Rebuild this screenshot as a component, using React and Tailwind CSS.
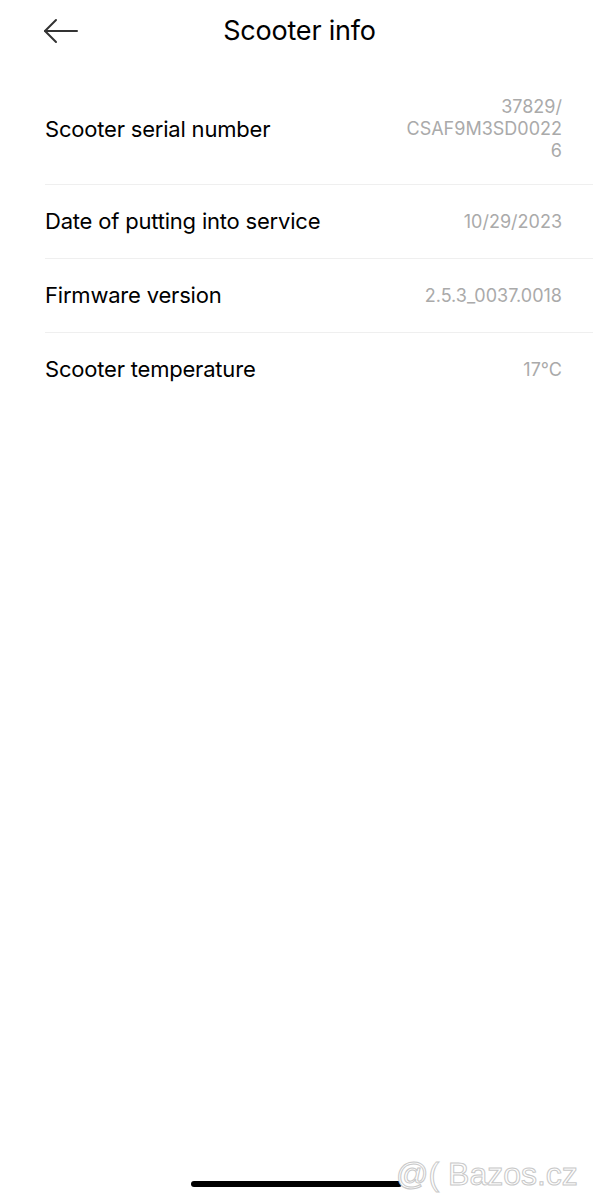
import React from 'react';

const rows = [
    { label: 'Scooter serial number', value: '37829/\u200BCSAF9M3SD00226' },
    { label: 'Date of putting into service', value: '10/29/2023' },
    { label: 'Firmware version', value: '2.5.3_0037.0018' },
    { label: 'Scooter temperature', value: '17°C' },
];

const BackArrow = () => (
    <svg width="36" height="26" viewBox="0 0 36 26" fill="none" stroke="#333" strokeWidth="2" strokeLinecap="round" strokeLinejoin="round">
        <path d="M34 13H2" />
        <path d="M13 2L2 13l11 11" />
    </svg>
);

const App = () => {
    return (
        <div className="relative min-h-[1200px] flex flex-col bg-white text-black font-['Inter','Liberation_Sans',sans-serif]">
            <header className="relative h-[62px] flex items-center justify-center pl-[6px]">
                <button className="absolute left-[43px] top-[18px]">
                    <BackArrow />
                </button>
                <h1 className="text-[27px] tracking-[-0.2px]">Scooter info</h1>
            </header>
            <div className="h-[12px]" />
            <ul className="pl-[45px]">
                {rows.map((row, i) => (
                    <li
                        key={row.label}
                        className={`flex items-center justify-between py-[22px] pr-[31px] ${i < rows.length - 1 ? 'border-b border-[#efefef]' : ''}`}
                    >
                        <span className="text-[22px] leading-[29px] tracking-[-0.2px]">{row.label}</span>
                        <span className="w-[160px] text-right text-[18px] leading-[22px] text-[#aaaaaa] [overflow-wrap:anywhere]">
                            {row.value}
                        </span>
                    </li>
                ))}
            </ul>
            <div className="flex-1" />
            <div className="flex justify-center pb-[13px]">
                <div className="w-[211px] h-[6px] rounded-full bg-black" />
            </div>
            <div className="absolute left-[396px] top-[1150px] text-[32px] text-white font-['Liberation_Sans',sans-serif] [-webkit-text-stroke:1px_#c8c8c8]">
                @( Bazos.cz
            </div>
        </div>
    );
};

export default App;
